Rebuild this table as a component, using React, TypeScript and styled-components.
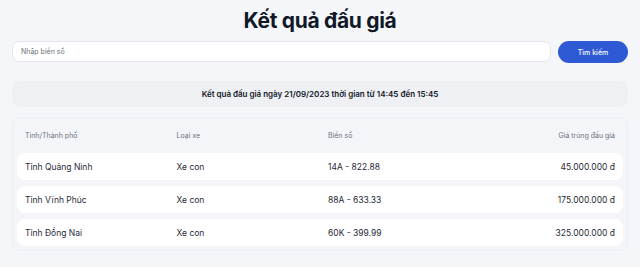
import React from 'react';
import styled, {createGlobalStyle} from 'styled-components';

const GlobalStyle = createGlobalStyle`
  body {
    margin: 0;
    background: #f5f6fa;
    font-family: Inter, "Noto Sans", sans-serif;
    color: #111827;
  }
`;

const Page = styled.div`
  padding: 8px 12px 0;
`;

const Title = styled.h1`
  margin: 0;
  text-align: center;
  font-size: 21px;
  line-height: 25px;
  font-weight: 700;
  letter-spacing: -0.015em;
`;

const SearchRow = styled.div`
  display: flex;
  gap: 7px;
  margin-top: 8px;
`;

const SearchInput = styled.input`
  flex: 1;
  height: 21px;
  box-sizing: border-box;
  border: 1px solid #e3e6ec;
  border-radius: 7px;
  background: #fff;
  padding: 0 8px;
  font-family: inherit;
  font-size: 7px;
  outline: none;
  &::placeholder {
    color: #6b7280;
  }
`;

const SearchButton = styled.button`
  width: 70px;
  height: 22px;
  border: none;
  border-radius: 11px;
  background: #2d59d5;
  color: #fff;
  font-family: inherit;
  font-size: 7px;
  font-weight: 500;
  cursor: pointer;
`;

const Banner = styled.div`
  margin-top: 18px;
  height: 26px;
  display: flex;
  align-items: center;
  justify-content: center;
  background: #eff0f4;
  border-radius: 8px;
  font-size: 8px;
  font-weight: 600;
`;

const Card = styled.div`
  margin-top: 10px;
  padding: 0 4px 4px;
  background: #f3f5f9;
  border: 1px solid #eceef3;
  border-radius: 8px;
`;

const Grid = styled.div`
  display: grid;
  grid-template-columns: repeat(4, 1fr);
  align-items: center;
`;

const HeaderRow = styled(Grid)`
  height: 35px;
  font-size: 7px;
  color: #6b7280;
`;

const Rows = styled.div`
  display: flex;
  flex-direction: column;
  gap: 6px;
`;

const Row = styled(Grid)`
  height: 27px;
  background: #fff;
  border-radius: 8px;
  font-size: 8.5px;
  color: #1f2937;
`;

const Cell = styled.div<{ $right?: boolean }>`
  padding: 0 8px;
  text-align: ${p => (p.$right ? 'right' : 'left')};
  white-space: nowrap;
`;

const results = [
  {city: 'Tỉnh Quảng Ninh', type: 'Xe con', plate: '14A - 822.88', price: '45.000.000 đ'},
  {city: 'Tỉnh Vĩnh Phúc', type: 'Xe con', plate: '88A - 633.33', price: '175.000.000 đ'},
  {city: 'Tỉnh Đồng Nai', type: 'Xe con', plate: '60K - 399.99', price: '325.000.000 đ'},
];

const App = () => (
  <>
    <GlobalStyle />
    <Page>
      <Title>Kết quả đấu giá</Title>
      <SearchRow>
        <SearchInput placeholder="Nhập biển số" />
        <SearchButton>Tìm kiếm</SearchButton>
      </SearchRow>
      <Banner>Kết quả đấu giá ngày 21/09/2023 thời gian từ 14:45 đến 15:45</Banner>
      <Card>
        <HeaderRow>
          <Cell>Tỉnh/Thành phố</Cell>
          <Cell>Loại xe</Cell>
          <Cell>Biển số</Cell>
          <Cell $right>Giá trúng đấu giá</Cell>
        </HeaderRow>
        <Rows>
          {results.map(r => (
            <Row key={r.plate}>
              <Cell>{r.city}</Cell>
              <Cell>{r.type}</Cell>
              <Cell>{r.plate}</Cell>
              <Cell $right>{r.price}</Cell>
            </Row>
          ))}
        </Rows>
      </Card>
    </Page>
  </>
);

export default App;
